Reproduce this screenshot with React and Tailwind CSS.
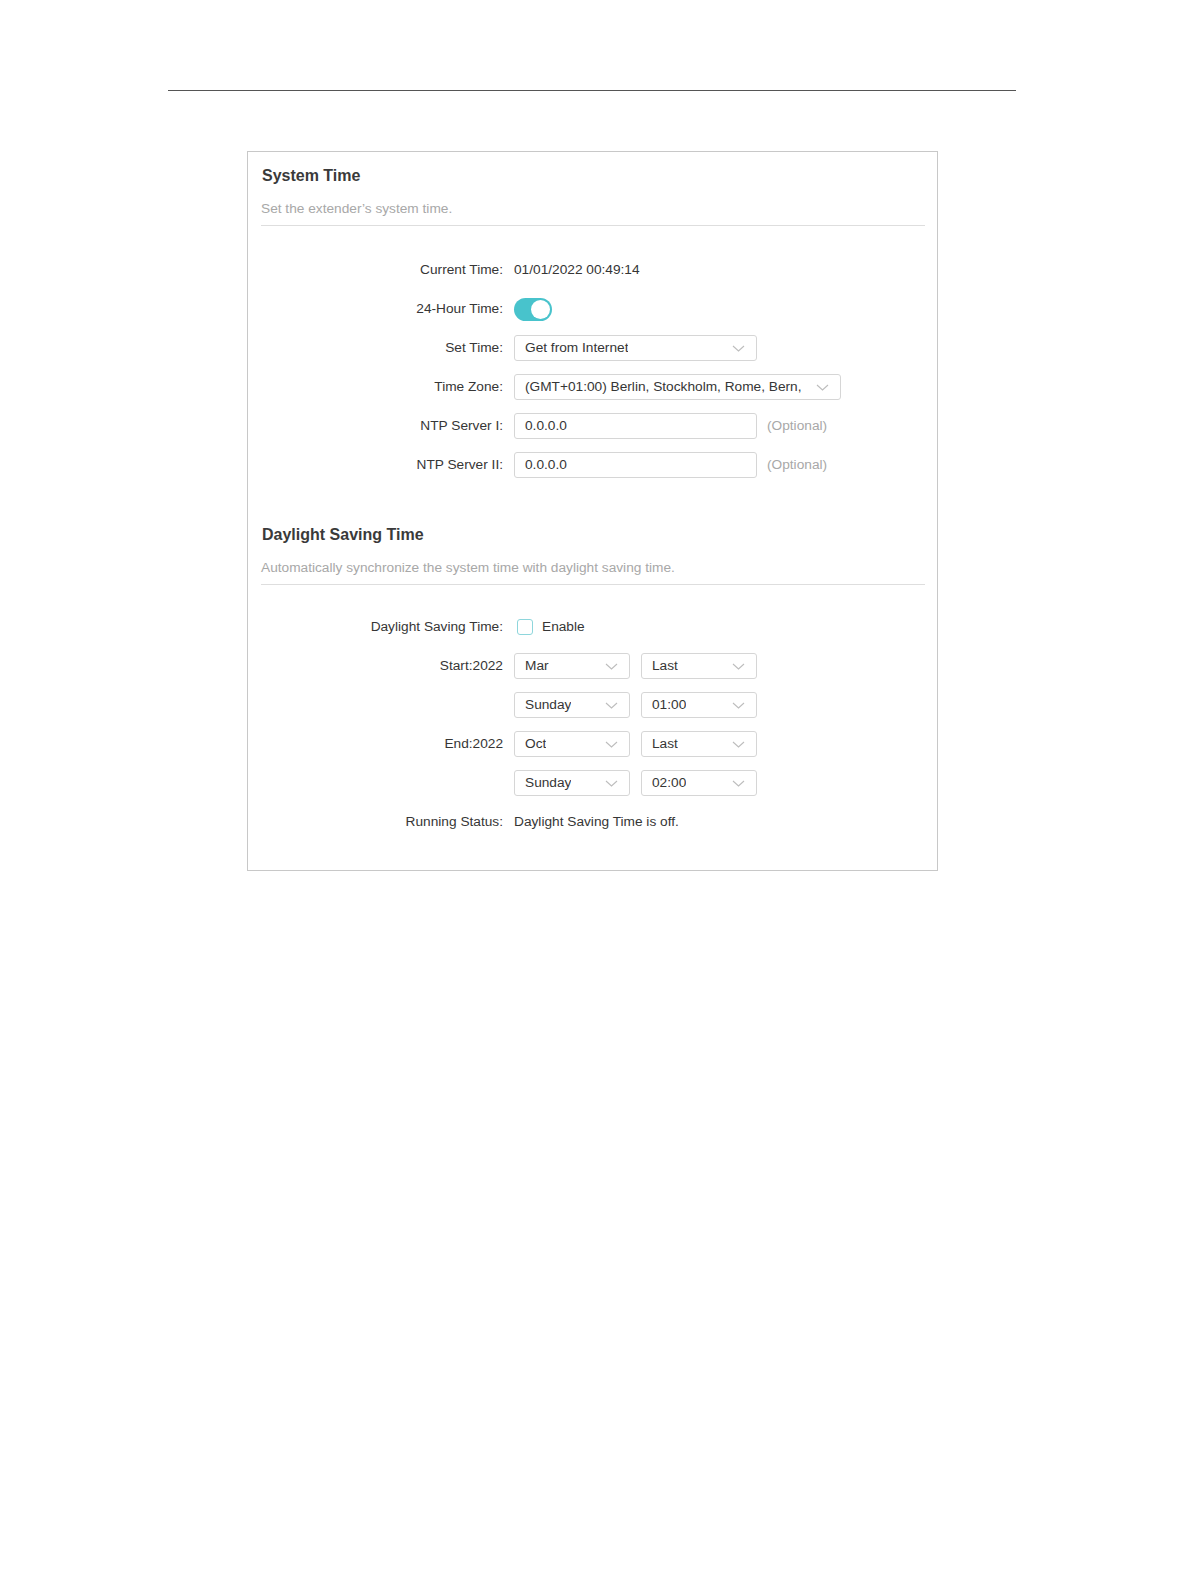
import React from 'react';

const Chevron = () => (
  <svg width="13" height="7" viewBox="0 0 13 7" fill="none" className="shrink-0">
    <path d="M1 1l5.5 5 5.5-5" stroke="#bdbdbd" strokeWidth="1.1" />
  </svg>
);

const Select = ({ value, w }) => (
  <div className={`flex h-[26px] items-center justify-between rounded-[3px] border border-[#d6d6d6] bg-white pl-[10px] pr-[11px] ${w}`}>
    <span className="truncate">{value}</span>
    <Chevron />
  </div>
);

const Input = ({ value }) => (
  <div className="flex h-[26px] w-[243px] items-center rounded-[3px] border border-[#d6d6d6] bg-white pl-[10px]">
    {value}
  </div>
);

const Row = ({ label, children }) => (
  <div className="flex h-[26px] items-center">
    <div className="w-[266px] shrink-0 pr-[11px] text-right whitespace-nowrap">{label}</div>
    <div className="flex items-center whitespace-nowrap">{children}</div>
  </div>
);

const SectionHead = ({ title, desc }) => (
  <div className="pl-[13px] pr-[12px]">
    <div className="h-[20px] pl-[1px] text-[16px] leading-[20px] font-bold text-[#3a3a3a]">{title}</div>
    <div className="mt-[15px] h-[16px] leading-[16px] text-[#a8a8a8]">{desc}</div>
    <div className="mt-[8px] border-b border-[#dedede]"></div>
  </div>
);

export default function App() {
  return (
    <div className="min-h-screen bg-white text-[13.7px] text-[#363636]" style={{ fontFamily: '"Liberation Sans", Arial, sans-serif' }}>
      <div className="pt-[90px]">
        <div className="ml-[168px] w-[848px] border-t border-[#555]"></div>
      </div>

      <div className="ml-[247px] mt-[60px] w-[691px] border border-[#c8c8c8] pt-[14px] pb-[35px]">
        <SectionHead title="System Time" desc="Set the extender’s system time." />

        <div className="mt-[31px] flex flex-col gap-[13px]">
          <Row label="Current Time:">01/01/2022 00:49:14</Row>
          <Row label="24-Hour Time:">
            <div className="flex h-[23px] w-[38px] items-center justify-end rounded-full bg-[#48c3cc] pr-[2px]">
              <div className="h-[19px] w-[19px] rounded-full bg-white"></div>
            </div>
          </Row>
          <Row label="Set Time:">
            <Select value="Get from Internet" w="w-[243px]" />
          </Row>
          <Row label="Time Zone:">
            <Select value="(GMT+01:00) Berlin, Stockholm, Rome, Bern," w="w-[327px]" />
          </Row>
          <Row label="NTP Server I:">
            <Input value="0.0.0.0" />
            <span className="ml-[10px] text-[#a8a8a8]">(Optional)</span>
          </Row>
          <Row label="NTP Server II:">
            <Input value="0.0.0.0" />
            <span className="ml-[10px] text-[#a8a8a8]">(Optional)</span>
          </Row>
        </div>

        <div className="mt-[47px]">
          <SectionHead title="Daylight Saving Time" desc="Automatically synchronize the system time with daylight saving time." />
        </div>

        <div className="mt-[29px] flex flex-col gap-[13px]">
          <Row label="Daylight Saving Time:">
            <div className="ml-[3px] h-[16px] w-[16px] rounded-[3px] border border-[#8ed6dc] bg-white"></div>
            <span className="ml-[9px]">Enable</span>
          </Row>
          <Row label="Start:2022">
            <Select value="Mar" w="w-[116px]" />
            <div className="ml-[11px]"><Select value="Last" w="w-[116px]" /></div>
          </Row>
          <Row label="">
            <Select value="Sunday" w="w-[116px]" />
            <div className="ml-[11px]"><Select value="01:00" w="w-[116px]" /></div>
          </Row>
          <Row label="End:2022">
            <Select value="Oct" w="w-[116px]" />
            <div className="ml-[11px]"><Select value="Last" w="w-[116px]" /></div>
          </Row>
          <Row label="">
            <Select value="Sunday" w="w-[116px]" />
            <div className="ml-[11px]"><Select value="02:00" w="w-[116px]" /></div>
          </Row>
          <Row label="Running Status:">Daylight Saving Time is off.</Row>
        </div>
      </div>
    </div>
  );
}
